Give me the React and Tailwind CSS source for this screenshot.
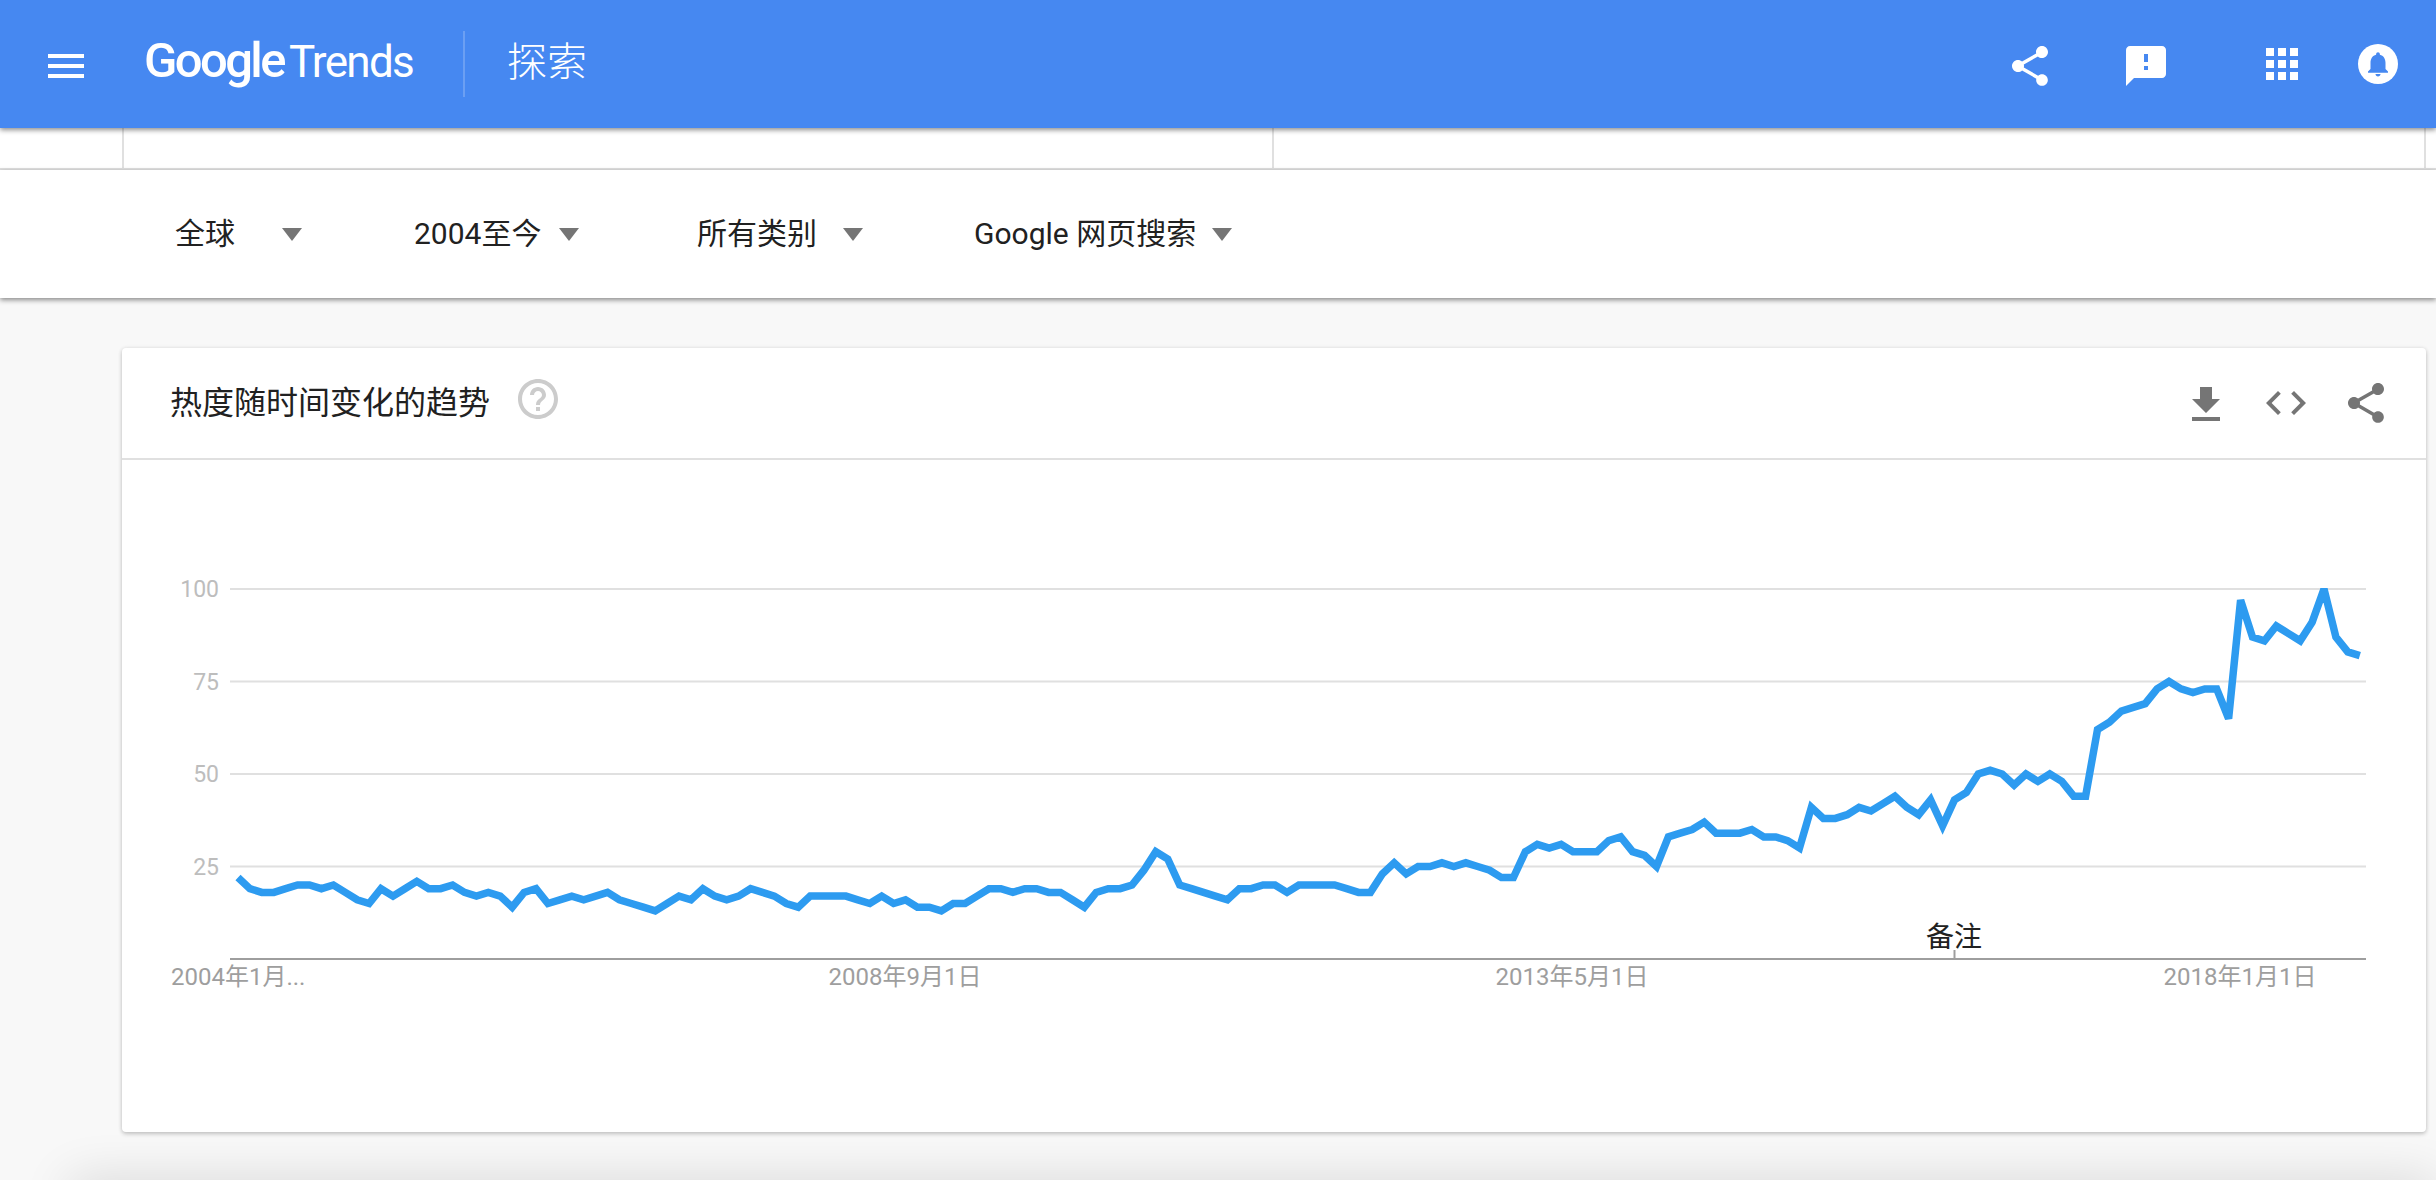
const trend = [
  22, 19, 18, 18, 19, 20, 20, 19, 20, 18, 16, 15, 19, 17, 19, 21, 19, 19, 20, 18,
  17, 18, 17, 14, 18, 19, 15, 16, 17, 16, 17, 18, 16, 15, 14, 13, 15, 17, 16, 19,
  17, 16, 17, 19, 18, 17, 15, 14, 17, 17, 17, 17, 16, 15, 17, 15, 16, 14, 14, 13,
  15, 15, 17, 19, 19, 18, 19, 19, 18, 18, 16, 14, 18, 19, 19, 20, 24, 29, 27, 20,
  19, 18, 17, 16, 19, 19, 20, 20, 18, 20, 20, 20, 20, 19, 18, 18, 23, 26, 23, 25,
  25, 26, 25, 26, 25, 24, 22, 22, 29, 31, 30, 31, 29, 29, 29, 32, 33, 29, 28, 25,
  33, 34, 35, 37, 34, 34, 34, 35, 33, 33, 32, 30, 41, 38, 38, 39, 41, 40, 42, 44,
  41, 39, 43, 36, 43, 45, 50, 51, 50, 47, 50, 48, 50, 48, 44, 44, 62, 64, 67, 68,
  69, 73, 75, 73, 72, 73, 73, 65, 97, 87, 86, 90, 88, 86, 91, 100, 87, 83, 82,
];

const FONT = 'Roboto, "Noto Sans CJK SC", sans-serif';
const toY = (v) => 959 - v * 3.7;
const points = trend.map((v, i) => `${(238 + i * 11.92).toFixed(1)},${toY(v).toFixed(1)}`).join(' ');

const Icon = ({ d, className }) => (
  <svg viewBox="0 0 24 24" className={className} fill="currentColor">
    <path d={d} />
  </svg>
);

const ICONS = {
  menu: 'M3 18h18v-2H3v2zm0-5h18v-2H3v2zm0-7v2h18V6H3z',
  share: 'M18 16.08c-.76 0-1.44.3-1.96.77L8.91 12.7c.05-.23.09-.46.09-.7s-.04-.47-.09-.7l7.05-4.11c.54.5 1.25.81 2.04.81 1.66 0 3-1.34 3-3s-1.34-3-3-3-3 1.34-3 3c0 .24.04.47.09.7L8.04 9.81C7.5 9.31 6.79 9 6 9c-1.66 0-3 1.34-3 3s1.34 3 3 3c.79 0 1.5-.31 2.04-.81l7.12 4.16c-.05.21-.08.43-.08.65 0 1.61 1.31 2.92 2.92 2.92 1.61 0 2.92-1.31 2.92-2.92s-1.31-2.92-2.92-2.92z',
  feedback: 'M20 2H4c-1.1 0-1.99.9-1.99 2L2 22l4-4h14c1.1 0 2-.9 2-2V4c0-1.1-.9-2-2-2zm-7 12h-2v-2h2v2zm0-4h-2V6h2v4z',
  apps: 'M4 8h4V4H4v4zm6 12h4v-4h-4v4zm-6 0h4v-4H4v4zm0-6h4v-4H4v4zm6 0h4v-4h-4v4zm6-10v4h4V4h-4zm-6 4h4V4h-4v4zm6 6h4v-4h-4v4zm0 6h4v-4h-4v4z',
  help: 'M11 18h2v-2h-2v2zm1-16C6.48 2 2 6.48 2 12s4.48 10 10 10 10-4.48 10-10S17.52 2 12 2zm0 18c-4.41 0-8-3.59-8-8s3.59-8 8-8 8 3.59 8 8-3.59 8-8 8zm0-14c-2.21 0-4 1.79-4 4h2c0-1.1.9-2 2-2s2 .9 2 2c0 2-3 1.75-3 5h2c0-2.25 3-2.5 3-5 0-2.21-1.79-4-4-4z',
  download: 'M19 9h-4V3H9v6H5l7 7 7-7zM5 18v2h14v-2H5z',
  code: 'M9.4 16.6L4.8 12l4.6-4.6L8 6l-6 6 6 6 1.4-1.4zm5.2 0l4.6-4.6-4.6-4.6L16 6l6 6-6 6-1.4-1.4z',
  bell: 'M12 22c1.1 0 2-.9 2-2h-4c0 1.1.89 2 2 2zm6-6v-5c0-3.07-1.64-5.64-4.5-6.32V4c0-.83-.67-1.5-1.5-1.5s-1.5.67-1.5 1.5v.68C7.63 5.36 6 7.92 6 11v5l-2 2v1h16v-1l-2-2z',
};

const Header = () => (
  <header className="relative z-20 flex h-[128px] items-center bg-[#4688f1] pl-[42px] pr-[38px] pt-[4px] text-white shadow-[0_2px_5px_rgba(0,0,0,0.45)]">
    <Icon d={ICONS.menu} className="h-[48px] w-[48px]" />
    <div className="ml-[54px] flex w-[319px] items-baseline pb-[12px] leading-none">
      <span className="text-[49px] font-medium tracking-[-2.6px]">Google</span>
      <span className="ml-[5px] text-[44px] tracking-[-1.7px]">Trends</span>
    </div>
    <div className="mb-[4px] h-[66px] w-[2px] bg-white/20" />
    <span className="mb-[6px] ml-[42px] text-[40px] font-light leading-none">探索</span>
    <div className="ml-auto flex items-center">
      <Icon d={ICONS.share} className="h-[48px] w-[48px]" />
      <Icon d={ICONS.feedback} className="ml-[68px] h-[48px] w-[48px]" />
      <Icon d={ICONS.apps} className="mb-[4px] ml-[88px] h-[48px] w-[48px]" />
      <svg viewBox="0 0 40 40" className="mb-[4px] ml-[52px] h-[40px] w-[40px]">
        <circle cx="20" cy="20" r="20" fill="#fff" />
        <path d={ICONS.bell} fill="#4688f1" transform="translate(5 5) scale(1.25)" />
      </svg>
    </div>
  </header>
);

const filters = [
  { label: '全球', box: 'w-[239px]', gap: 'ml-[47px]' },
  { label: '2004至今', box: 'w-[283px]', gap: 'ml-[18px]' },
  { label: '所有类别', box: 'w-[277px]', gap: 'ml-[26px]' },
  { label: 'Google 网页搜索', box: 'w-[270px]', gap: 'ml-[16px]' },
];

const FilterBar = () => (
  <>
    <div className="flex h-[42px] border-b-2 border-[#e0e0e0] bg-white pl-[122px] pr-[10px]">
      <div className="w-[1152px] border-x-2 border-[#e0e0e0]" />
      <div className="flex-1 border-r-2 border-[#e0e0e0]" />
    </div>
    <div className="relative z-10 flex h-[128px] items-center bg-white pl-[175px] text-[30px] text-[#212121] shadow-[0_2px_5px_rgba(0,0,0,0.45)]">
      {filters.map((f) => (
        <div key={f.label} className={`flex items-center ${f.box}`}>
          <span className="leading-none">{f.label}</span>
          <span className={`h-0 w-0 border-x-[10px] border-t-[13px] border-x-transparent border-t-[#757575] ${f.gap}`} />
        </div>
      ))}
    </div>
  </>
);

const Chart = () => (
  <svg viewBox="122 460 2304 672" className="h-[672px] w-[2304px]" fontFamily={FONT}>
    <defs>
      <clipPath id="plot">
        <rect x="230" y="588" width="2136" height="371" />
      </clipPath>
    </defs>
    {[25, 50, 75, 100].map((v) => (
      <g key={v}>
        <line x1="230" x2="2366" y1={toY(v)} y2={toY(v)} stroke="#e0e0e0" strokeWidth="2" />
        <text x="219" y={toY(v) + 8} textAnchor="end" fontSize="23" fill="#bdbdbd">{v}</text>
      </g>
    ))}
    <line x1="230" x2="2366" y1="959" y2="959" stroke="#9e9e9e" strokeWidth="2" />
    <line x1="1954.5" x2="1954.5" y1="950" y2="959" stroke="#9e9e9e" strokeWidth="2" />
    <polyline points={points} fill="none" stroke="#2d9bf0" strokeWidth="7.5" strokeLinejoin="miter" clipPath="url(#plot)" />
    <text x="1954" y="947" textAnchor="middle" fontSize="28" fill="#212121">备注</text>
    <text x="171" y="985" fontSize="24" fill="#9e9e9e">2004年1月...</text>
    <text x="905" y="985" textAnchor="middle" fontSize="24" fill="#9e9e9e">2008年9月1日</text>
    <text x="1572" y="985" textAnchor="middle" fontSize="24" fill="#9e9e9e">2013年5月1日</text>
    <text x="2240" y="985" textAnchor="middle" fontSize="24" fill="#9e9e9e">2018年1月1日</text>
  </svg>
);

const TrendCard = () => (
  <section className="ml-[122px] mr-[10px] mt-[50px] h-[784px] rounded-[4px] bg-white shadow-[0_2px_4px_rgba(0,0,0,0.2),0_0_4px_rgba(0,0,0,0.08)]">
    <div className="flex h-[112px] items-center border-b-2 border-[#e0e0e0] pl-[48px] pr-[36px]">
      <h2 className="text-[32px] font-normal leading-none text-[#212121]">热度随时间变化的趋势</h2>
      <Icon d={ICONS.help} className="mb-[8px] ml-[24px] h-[48px] w-[48px] text-[#cccccc]" />
      <div className="ml-auto flex items-center text-[#757575]">
        <Icon d={ICONS.download} className="mt-[4px] h-[48px] w-[48px]" />
        <Icon d={ICONS.code} className="ml-[32px] h-[48px] w-[48px]" />
        <Icon d={ICONS.share} className="ml-[32px] h-[48px] w-[48px]" />
      </div>
    </div>
    <Chart />
  </section>
);

export default function App() {
  return (
    <div className="h-[1180px] overflow-hidden bg-[#f8f8f8]" style={{ fontFamily: FONT }}>
      <Header />
      <FilterBar />
      <TrendCard />
      <div className="ml-[70px] mt-[48px] h-[40px] bg-[#eeeeee] shadow-[0_0_50px_rgba(0,0,0,0.14)]" />
    </div>
  );
}
